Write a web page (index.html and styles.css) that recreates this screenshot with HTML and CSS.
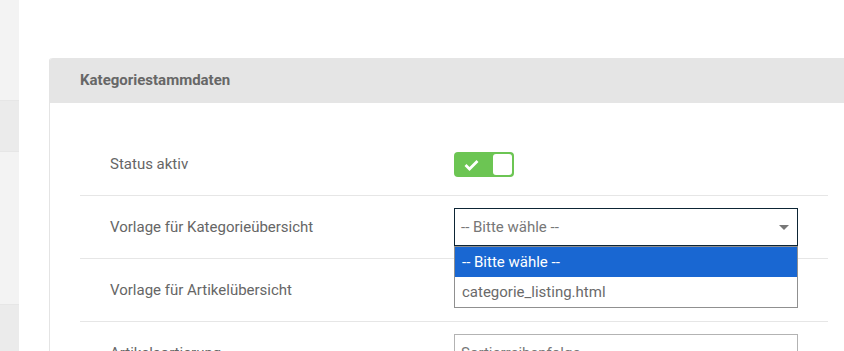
FILE: index.html
```html
<!DOCTYPE html>
<html lang="de">
<head>
    <meta charset="UTF-8">
    <meta name="viewport" content="width=device-width, initial-scale=1.0">
    <title>Kategorie bearbeiten</title>
    <link rel="stylesheet" href="styles.css">
</head>
<body>

<div class="page">
    <aside class="sidebar">
        <div class="side-item"></div>
        <div class="side-item active"></div>
        <div class="side-item tall"></div>
        <div class="side-item active"></div>
    </aside>

    <main class="main">
        <section class="card">
            <div class="card-header">Kategoriestammdaten</div>
            <div class="card-body">
                <div class="form-row">
                    <label class="form-label">Status aktiv</label>
                    <div class="form-control">
                        <span class="switch">
                            <svg class="switch-check" width="15" height="12" viewBox="0 0 15 12">
                                <path d="M1.5 6 L5.5 10 L13.5 2" fill="none" stroke="#fff" stroke-width="2.8"/>
                            </svg>
                            <span class="switch-knob"></span>
                        </span>
                    </div>
                </div>
                <div class="form-row">
                    <label class="form-label">Vorlage für Kategorieübersicht</label>
                    <div class="form-control">
                        <div class="select open">
                            <span class="select-value">-- Bitte wähle --</span>
                            <span class="select-arrow"></span>
                            <ul class="select-list">
                                <li class="selected">-- Bitte wähle --</li>
                                <li>categorie_listing.html</li>
                            </ul>
                        </div>
                    </div>
                </div>
                <div class="form-row">
                    <label class="form-label">Vorlage für Artikelübersicht</label>
                    <div class="form-control"></div>
                </div>
                <div class="form-row">
                    <label class="form-label">Artikelsortierung</label>
                    <div class="form-control">
                        <div class="select">
                            <span class="select-value">Sortierreihenfolge</span>
                            <span class="select-arrow"></span>
                        </div>
                    </div>
                </div>
            </div>
        </section>
    </main>
</div>

</body>
</html>
```

FILE: styles.css
```css
html, body {
    margin: 0;
    padding: 0;
    height: 100%;
    overflow: hidden;
}
body {
    font-family: Roboto, "Liberation Sans", Arial, sans-serif;
    font-size: 15px;
    color: #666;
    background: #fff;
}
.page {
    display: flex;
    height: 100%;
}
.sidebar {
    width: 19px;
    flex-shrink: 0;
    background: #f3f3f3;
    display: flex;
    flex-direction: column;
}
.side-item {
    height: 100px;
    flex-shrink: 0;
    border-bottom: 1px solid #e6e6e6;
}
.side-item.active {
    height: 50px;
    background: #ebebeb;
}
.side-item.tall {
    height: 152px;
}
.main {
    flex: 1;
    padding: 58px 0 0 30px;
    overflow: hidden;
}
.card {
    width: 800px;
    border-left: 1px solid #e4e4e4;
    border-top-left-radius: 3px;
}
.card-header {
    height: 45px;
    line-height: 45px;
    padding-left: 30px;
    background: #e5e5e5;
    font-weight: bold;
    color: #676767;
    border-top-left-radius: 3px;
}
.card-body {
    padding: 30px 22px 0 30px;
}
.form-row {
    display: flex;
    align-items: center;
    height: 62px;
    padding-left: 30px;
    border-bottom: 1px solid #e6e6e6;
}
.form-label {
    width: 344px;
    flex-shrink: 0;
}
.form-control {
    width: 344px;
}
.switch {
    position: relative;
    display: flex;
    align-items: center;
    width: 60px;
    height: 25px;
    box-sizing: border-box;
    background: #6cc553;
    border-radius: 4px;
    margin-top: 1px;
}
.switch-check {
    margin-left: 10px;
}
.switch-knob {
    position: absolute;
    right: 2px;
    top: 2px;
    width: 19px;
    height: 21px;
    background: #fff;
    border-radius: 3px;
}
.select {
    position: relative;
    height: 38px;
    box-sizing: border-box;
    border: 1px solid #b3b3b3;
    display: flex;
    align-items: center;
    padding-left: 6px;
    color: #777;
    background: #fff;
}
.select.open {
    border-color: #0d2535;
}
.select-arrow {
    position: absolute;
    right: 8px;
    top: 16px;
    width: 0;
    height: 0;
    border-left: 5px solid transparent;
    border-right: 5px solid transparent;
    border-top: 5px solid #777;
}
.select-list {
    position: absolute;
    left: -1px;
    right: -1px;
    top: 37px;
    margin: 0;
    padding: 0;
    list-style: none;
    border: 1px solid #909090;
    background: #fff;
    z-index: 2;
}
.select-list li {
    height: 30px;
    line-height: 30px;
    padding-left: 7px;
    color: #6a6a6a;
}
.select-list li.selected {
    background: #1967d2;
    color: #fff;
}
```
